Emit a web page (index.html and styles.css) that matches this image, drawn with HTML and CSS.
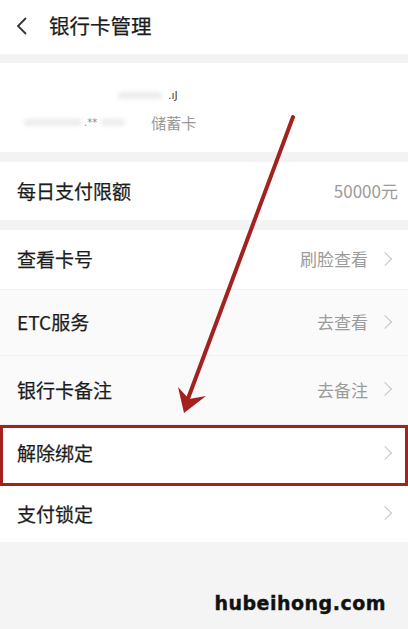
FILE: index.html
```html
<!DOCTYPE html>
<html lang="zh-CN">
<head>
<meta charset="utf-8">
<link rel="stylesheet" href="styles.css">
</head>
<body>
<div class="page">
  <header class="header">
    <svg class="back" width="14" height="20" viewBox="0 0 14 20"><path d="M11 2 L3 10 L11 18" fill="none" stroke="#333" stroke-width="1.8"/></svg>
    <span class="title">银行卡管理</span>
  </header>
  <div class="gap g9"></div>
  <section class="card">
    <div class="line1"><span class="blur b1"></span><span class="tiny">.ıJ</span></div>
    <div class="line2"><span class="blur b2"></span><span class="stars">.**</span><span class="blur b3"></span><span class="type">储蓄卡</span></div>
  </section>
  <div class="gap g10"></div>
  <div class="row r1"><span class="label">每日支付限额</span><span class="value">50000元</span></div>
  <div class="gap g10"></div>
  <div class="row r2"><span class="label">查看卡号</span><span class="value">刷脸查看</span><span class="chev"></span></div>
  <div class="row r3 tint"><span class="label">ETC服务</span><span class="value">去查看</span><span class="chev"></span></div>
  <div class="row r4 tint"><span class="label">银行卡备注</span><span class="value">去备注</span><span class="chev"></span></div>
  <div class="row r5 boxed"><span class="label">解除绑定</span><span class="chev"></span></div>
  <div class="row r6"><span class="label">支付锁定</span><span class="chev"></span></div>
  <div class="footer"><span class="wm">hubeihong.com</span></div>
  <svg class="arrow" width="408" height="629" viewBox="0 0 408 629">
    <line x1="293" y1="117" x2="186" y2="404" stroke="#a3221d" stroke-width="4" stroke-linecap="round"/>
    <path d="M184 413 L178 387 L189 399 L206 396 Z" fill="#a3221d"/>
  </svg>
</div>
</body>
</html>
```
FILE: styles.css
```css
html, body {
  margin: 0;
  padding: 0;
}
body {
  background: #f4f4f4;
  font-family: "Noto Sans CJK SC", "Noto Sans", sans-serif;
}
.page {
  position: relative;
  width: 408px;
  height: 629px;
  overflow: hidden;
  background: #f4f4f4;
}
.header {
  height: 54px;
  background: #fff;
  display: flex;
  align-items: center;
  padding-left: 15px;
  box-sizing: border-box;
}
.back {
  display: block;
  margin-top: -2px;
}
.title {
  margin-left: 20px;
  font-size: 20.5px;
  color: #1c1c1c;
  line-height: 1;
  margin-top: -3px;
  -webkit-text-stroke: 0.25px #1c1c1c;
}
.gap { background: #f3f3f3; }
.g9 { height: 9px; }
.g10 { height: 10px; }
.card {
  height: 89px;
  background: #fff;
  position: relative;
}
.line1 {
  position: absolute;
  top: 26px;
  left: 118px;
  display: flex;
  align-items: center;
  gap: 6px;
}
.line2 {
  position: absolute;
  top: 49px;
  left: 24px;
  display: flex;
  align-items: center;
}
.blur {
  display: inline-block;
  height: 7px;
  background: #ececec;
  border-radius: 3px;
  filter: blur(2px);
}
.b1 { width: 44px; }
.b2 { width: 58px; }
.b3 { width: 24px; margin-left: 4px; }
.tiny {
  font-size: 11px;
  color: #444;
  font-family: "DejaVu Sans", sans-serif;
}
.stars {
  font-size: 10px;
  color: #888;
  margin-left: 2px;
  font-family: "DejaVu Sans", sans-serif;
}
.type {
  font-size: 15px;
  color: #999;
  margin-left: 26px;
}
.row {
  display: flex;
  align-items: center;
  background: #fff;
  box-sizing: border-box;
  padding: 0 14px 0 17px;
  border-bottom: 1px solid #f1f1f1;
}
.tint { background: #fafafa; }
.r1 { height: 58px; border-bottom: none; }
.r2 { height: 60px; }
.r3 { height: 66px; }
.r4 { height: 69px; }
.r5 { height: 61px; }
.r6 { height: 56px; border-bottom: none; }
.boxed {
  border: 3px solid #a3221d;
  padding: 0 11px 4px 14px;
}
.label {
  font-size: 19px;
  color: #1c1c1c;
  line-height: 1;
  flex: 1;
  margin-top: -2px;
  -webkit-text-stroke: 0.25px #1c1c1c;
}
.value {
  font-size: 17px;
  color: #9b9b9b;
  line-height: 1;
  margin-top: -2px;
}
.r1 .value { margin-right: -4px; }
.chev {
  width: 9px;
  height: 9px;
  border-top: 1.5px solid #c4c4c4;
  border-right: 1.5px solid #c4c4c4;
  transform: rotate(45deg);
  margin-left: 12px;
  margin-right: 4px;
  margin-top: -2px;
}
.footer {
  height: 87px;
  display: flex;
  justify-content: flex-end;
  align-items: flex-start;
  padding-right: 22px;
  padding-top: 52px;
  box-sizing: border-box;
}
.wm {
  font-family: "DejaVu Sans", sans-serif;
  font-weight: bold;
  font-size: 19px;
  color: #111;
  letter-spacing: 0.5px;
  line-height: 1;
  -webkit-text-stroke: 0.4px #111;
}
.arrow {
  position: absolute;
  left: 0;
  top: 0;
  pointer-events: none;
}
```
